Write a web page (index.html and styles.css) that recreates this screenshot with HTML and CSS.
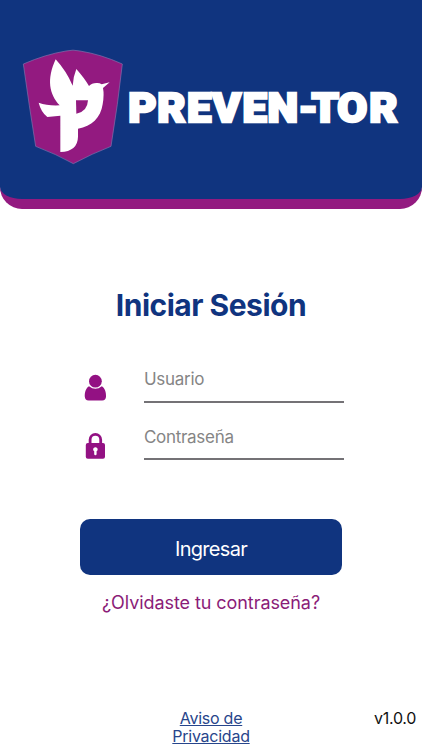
FILE: index.html
```html
<!DOCTYPE html>
<html lang="es">
<head>
<meta charset="utf-8">
<meta name="viewport" content="width=device-width, initial-scale=1">
<title>Preven-Tor</title>
<link rel="stylesheet" href="styles.css">
</head>
<body>
<header class="brand">
  <svg class="shield" viewBox="0 0 360 405" aria-hidden="true">
    <path class="shield-base" d="M25 72Q92 43 153 33Q174 28 195 33Q258 43 322 72Q309 190 288 319Q231 341 175 371Q123 342 62 319Q42 195 25 72Z"/>
    <path class="bird" d="M122 58Q154 93 173 137Q174 112 184 87Q208 114 222 138Q231 128 247 129Q254 129 260 133L284 127L264 144Q268 164 263 193C257 233 230 260 189 266V290Q188 334 136 336V227L97 231Q78 216 71 188Q98 198 134 196C103 163 94 119 122 58Z"/>
    <path class="shield-hole" d="M183 181H219Q217 216 184 221Z"/>
  </svg>
  <svg class="wordmark" viewBox="0 0 280 50">
    <text transform="scale(1.06 1)" x="2.1 29.4 57.6 81.4 109.8 133.4 162.7 175 199.4 229.4" y="39">PREVEN-TOR</text>
  </svg>
</header>
<main class="login">
  <h1 class="title">Iniciar Sesión</h1>
  <form class="form">
    <div class="field">
      <svg class="icon" viewBox="0 0 24 28" aria-hidden="true">
        <circle cx="12.4" cy="7.2" r="6.4"/>
        <path d="M6 12.3Q12.4 17.3 18.8 12.3C21.9 14.1 23.2 18.5 23 22.8Q22.8 26.5 19.2 26.5H5.6Q2 26.5 1.8 22.8C1.6 18.5 2.9 14.1 6 12.3Z"/>
      </svg>
      <input class="input user" type="text" placeholder="Usuario">
    </div>
    <div class="field">
      <svg class="icon" viewBox="0 0 24 28" aria-hidden="true">
        <path class="shackle" d="M7.1 12V7.7a5.3 5.3 0 0 1 10.6 0V12"/>
        <rect x="2.8" y="11" width="19.2" height="15.8" rx="2"/>
        <path class="keyhole" d="M12.4 15.2a2.2 2.2 0 0 1 1.2 4.1V22a1.2 1.2 0 0 1-2.4 0v-2.7A2.2 2.2 0 0 1 12.4 15.2Z"/>
      </svg>
      <input class="input pass" type="password" placeholder="Contraseña">
    </div>
    <button class="submit" type="button">Ingresar</button>
  </form>
  <a class="forgot">¿Olvidaste tu contraseña?</a>
</main>
<footer class="footer">
  <a class="privacy">Aviso de<br>Privacidad</a>
  <span class="version">v1.0.0</span>
</footer>
</body>
</html>
```
FILE: styles.css
```css
* { box-sizing: border-box; }
body {
  margin: 0;
  height: 750px;
  display: flex;
  flex-direction: column;
  overflow: hidden;
  background: #fff;
  font-family: Inter, "Liberation Sans", sans-serif;
}
.brand {
  height: 209px;
  padding: 40px 0 0 15px;
  display: flex;
  align-items: flex-start;
  background: #10347f;
  border-bottom: 10px solid #931a80;
  border-radius: 0 0 22px 22px;
}
.shield { width: 120px; height: 135px; flex: none; }
.shield-base { fill: #931a80; stroke: #8174ad; stroke-width: 2; }
.bird { fill: #fff; }
.shield-hole { fill: #931a80; }
.wordmark { width: 280px; height: 50px; flex: none; margin: 43px 0 0 -9px; }
.wordmark text {
  font: 900 41px Roboto, sans-serif;
  fill: #fff;
  stroke: #fff;
  stroke-width: 2.5px;
}
.login { display: flex; flex-direction: column; align-items: center; }
.title {
  margin: 78px 0 0;
  font-size: 30px;
  line-height: 36px;
  font-weight: 700;
  letter-spacing: -0.5px;
  color: #10347f;
}
.form { width: 262px; margin-top: 35px; }
.field { height: 58px; display: flex; padding-left: 3px; }
.field + .field { height: 57px; }
.icon { width: 24px; height: 28px; margin: 16px 37px 0 0; flex: none; fill: #931183; }
.shackle { fill: none; stroke: #931183; stroke-width: 2.8; }
.keyhole { fill: #fff; }
.input {
  width: 200px;
  height: 45px;
  padding: 0 0 1px;
  border: 0;
  border-bottom: 2px solid #747276;
  border-radius: 0;
  outline: 0;
  background: none;
  font: 400 17px Inter, sans-serif;
  letter-spacing: -0.3px;
}
.pass { height: 44px; padding: 0; }
.input::placeholder { color: #858585; opacity: 1; }
.submit {
  display: block;
  width: 262px;
  height: 56px;
  margin-top: 46px;
  padding: 3px 0 0;
  border: 0;
  border-radius: 10px;
  background: #10347f;
  color: #fff;
  font: 400 20px Inter, sans-serif;
  letter-spacing: -0.7px;
}
.forgot { margin-top: 17px; font-size: 18px; line-height: 22px; letter-spacing: -0.07px; color: #8b1c78; }
.footer {
  margin-top: auto;
  display: grid;
  grid-template-columns: 1fr 100px 1fr;
  padding: 0 6px 5px;
  font-size: 16px;
  line-height: 18px;
}
.privacy { grid-column: 2; text-align: center; letter-spacing: -0.25px; color: #27458b; text-decoration: underline; }
.version { justify-self: end; letter-spacing: -0.3px; color: #111; }
```
